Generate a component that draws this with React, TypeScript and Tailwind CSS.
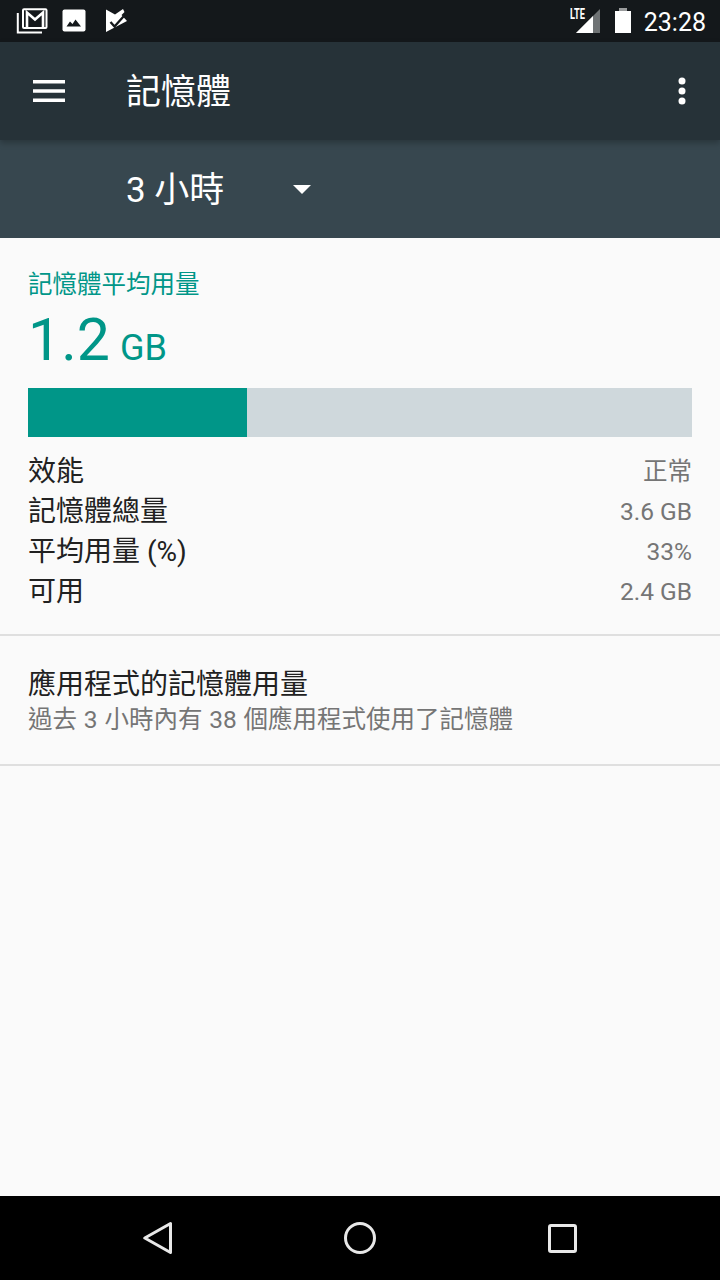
const font = "font-['Roboto','Noto_Sans_CJK_TC',sans-serif]";

const stats = [
  { label: "效能", value: "正常" },
  { label: "記憶體總量", value: "3.6 GB" },
  { label: "平均用量 (%)", value: "33%" },
  { label: "可用", value: "2.4 GB" },
];

function StatusBar() {
  return (
    <div className="flex h-[42px] items-center justify-between bg-[#14181b] pl-4 pr-[14px] text-white">
      <div className="flex items-center">
        <svg width="32" height="26" viewBox="0 0 32 26" fill="none">
          <path d="M1.800 5v19.500H26" stroke="#fff" strokeWidth="2" />
          <rect x="7" y="1.300" width="23.500" height="18.700" rx="1" stroke="#fff" strokeWidth="2" />
          <path d="M11 20V4.500l8 7 8-7V20" stroke="#fff" strokeWidth="2.600" />
        </svg>
        <svg className="ml-[14px]" width="24" height="24" viewBox="0 0 24 24">
          <rect x="0.500" y="0.500" width="23" height="22" rx="2" fill="#fff" />
          <path d="M4.500 17.500l3.500-5 2.500 2.500 3-4.500 5.500 7z" fill="#14181b" />
        </svg>
        <svg className="ml-[20px]" width="22" height="26" viewBox="0 0 22 26">
          <path d="M0 1.500l9 5 8-5.500 1.500 3-3 3 5.500 6L0 24z" fill="#fff" />
          <path d="M4.500 14l4 4.500 9-10" stroke="#14181b" strokeWidth="2.300" fill="none" />
        </svg>
      </div>
      <div className="flex items-center">
        <div className="relative h-[26px] w-[32px]">
          <span className="absolute left-[2px] top-[-1px] origin-left scale-x-[0.66] font-['Roboto',sans-serif] text-[14px] font-bold leading-[14px]">LTE</span>
          <svg className="absolute left-[8px] top-[1px]" width="24" height="24" viewBox="0 0 24 24">
            <path d="M0 24L24 0v24z" fill="#6f7375" />
            <path d="M0 24L17 7v17z" fill="#fff" />
          </svg>
        </div>
        <svg className="ml-[15px]" width="16" height="26" viewBox="0 0 16 26">
          <path d="M4 0h8v3H4z" fill="#9a9c9d" />
          <path d="M0 3h16v22H0z" fill="#fff" />
        </svg>
        <span className={`ml-[13px] mt-[4px] text-[25px] leading-[30px] ${font}`}>23:28</span>
      </div>
    </div>
  );
}

function AppBar() {
  return (
    <div className="relative flex h-[98px] items-center bg-[#263238] pl-[33px] pr-[34px] shadow-[0_3px_6px_rgba(0,0,0,0.25)]">
      <svg width="32" height="22" viewBox="0 0 32 22">
        <path d="M0 0h32v3.500H0zM0 9.250h32v3.500H0zM0 18.500h32V22H0z" fill="#fff" />
      </svg>
      <h1 className={`ml-[61px] mt-[4px] text-[35px] font-normal leading-[42px] text-white ${font}`}>記憶體</h1>
      <svg className="ml-auto" width="8" height="28" viewBox="0 0 8 28">
        <circle cx="4" cy="4" r="3.500" fill="#fff" />
        <circle cx="4" cy="14" r="3.500" fill="#fff" />
        <circle cx="4" cy="24" r="3.500" fill="#fff" />
      </svg>
    </div>
  );
}

function Spinner() {
  return (
    <div className="flex h-[98px] items-center bg-[#37474f] pl-[126px] text-white">
      <span className={`mt-[3px] text-[35px] leading-[40px] ${font}`}>3 小時</span>
      <svg className="ml-[69px]" width="18" height="9" viewBox="0 0 18 9">
        <path d="M0 0h18L9 9z" fill="#fff" />
      </svg>
    </div>
  );
}

function MemoryBar() {
  return (
    <div className="mt-[5px] flex h-[49px] bg-[#cfd8dc]">
      <div className="w-[219px] bg-[#009688]" />
    </div>
  );
}

function NavBar() {
  return (
    <div className="flex h-[84px] items-center justify-center bg-black">
      <svg width="30" height="34" viewBox="0 0 30 34" className="mr-[170px]">
        <path d="M27.500 2.500v29L1.800 17z" stroke="#e8e8e8" strokeWidth="3" strokeLinejoin="round" fill="none" />
      </svg>
      <svg width="34" height="34" viewBox="0 0 34 34">
        <circle cx="17" cy="17" r="14.500" stroke="#e8e8e8" strokeWidth="3" fill="none" />
      </svg>
      <svg width="29" height="29" viewBox="0 0 29 29" className="ml-[171px]">
        <rect x="1.500" y="1.500" width="26" height="26" rx="1.500" stroke="#e8e8e8" strokeWidth="3" fill="none" />
      </svg>
    </div>
  );
}

export default function App() {
  return (
    <div className={`flex h-[1280px] w-[720px] flex-col overflow-hidden bg-[#fafafa] ${font}`}>
      <StatusBar />
      <AppBar />
      <Spinner />

      <main className="flex-1">
        <section className="border-b-2 border-[#dfdfdf] px-7 pb-[22px] pt-[30px]">
          <p className="text-[24.500px] leading-[34px] text-[#009688]">記憶體平均用量</p>
          <p className="mt-[3px] flex items-baseline leading-[70px] text-[#009688]">
            <span className="text-[59px]">1.2</span>
            <span className="ml-[10px] text-[36px]">GB</span>
          </p>
          <MemoryBar />
          <div className="mt-[15px]">
            {stats.map((stat) => (
              <div key={stat.label} className="flex h-10 items-center justify-between">
                <span className="text-[28px] text-[#212121]">{stat.label}</span>
                <span className="text-[24.500px] text-[#757575]">{stat.value}</span>
              </div>
            ))}
          </div>
        </section>

        <section className="border-b-2 border-[#dfdfdf] px-7 pb-[28px] pt-[30px]">
          <p className="text-[28px] leading-[38px] text-[#212121]">應用程式的記憶體用量</p>
          <p className="text-[24.500px] leading-[32px] text-[#757575] [word-spacing:0.75px]">過去 3 小時內有 38 個應用程式使用了記憶體</p>
        </section>
      </main>

      <NavBar />
    </div>
  );
}
